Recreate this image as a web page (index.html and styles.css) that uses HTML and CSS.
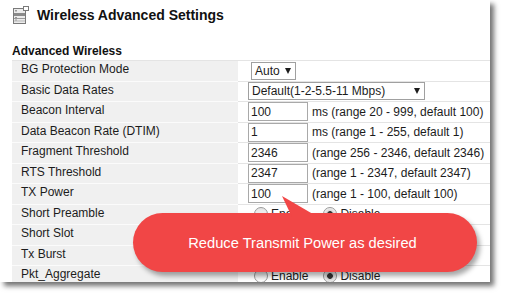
FILE: index.html
```html
<!DOCTYPE html>
<html lang="en">
<head>
    <meta charset="UTF-8">
    <title>Wireless Advanced Settings</title>
    <link rel="stylesheet" href="styles.css">
</head>
<body>

    <div class="panel">
        <div class="page-title">
            <svg class="title-icon" width="16" height="18" viewBox="0 0 16 18">
                <rect x="0.5" y="2.5" width="12" height="15" fill="#ececec" stroke="#7a7a7a"/>
                <rect x="1" y="7" width="11" height="3" fill="#8a8a8a"/>
                <line x1="1" y1="12.5" x2="12" y2="12.5" stroke="#9a9a9a"/>
                <line x1="1" y1="15" x2="12" y2="15" stroke="#b5b5b5"/>
                <rect x="2" y="4" width="2" height="1.5" fill="#9a9a9a"/>
                <rect x="2" y="11" width="2" height="1" fill="#9a9a9a"/>
                <rect x="2" y="13.5" width="2" height="1" fill="#9a9a9a"/>
                <rect x="10.5" y="0.5" width="5" height="4" fill="#fff" stroke="#7a7a7a"/>
            </svg>
            <h1>Wireless Advanced Settings</h1>
        </div>

        <h2 class="section-title">Advanced Wireless</h2>

        <div class="settings">
            <div class="row">
                <div class="label">BG Protection Mode</div>
                <div class="value">
                    <span class="select select-auto">Auto<i class="caret"></i></span>
                </div>
            </div>
            <div class="row">
                <div class="label">Basic Data Rates</div>
                <div class="value">
                    <span class="select select-rates">Default(1-2-5.5-11 Mbps)<i class="caret"></i></span>
                </div>
            </div>
            <div class="row">
                <div class="label">Beacon Interval</div>
                <div class="value">
                    <input class="field" type="text" value="100">
                    <span>ms (range 20 - 999, default 100)</span>
                </div>
            </div>
            <div class="row">
                <div class="label">Data Beacon Rate (DTIM)</div>
                <div class="value">
                    <input class="field" type="text" value="1">
                    <span>ms (range 1 - 255, default 1)</span>
                </div>
            </div>
            <div class="row">
                <div class="label">Fragment Threshold</div>
                <div class="value">
                    <input class="field" type="text" value="2346">
                    <span>(range 256 - 2346, default 2346)</span>
                </div>
            </div>
            <div class="row">
                <div class="label">RTS Threshold</div>
                <div class="value">
                    <input class="field" type="text" value="2347">
                    <span>(range 1 - 2347, default 2347)</span>
                </div>
            </div>
            <div class="row">
                <div class="label">TX Power</div>
                <div class="value">
                    <input class="field" type="text" value="100">
                    <span>(range 1 - 100, default 100)</span>
                </div>
            </div>
            <div class="row">
                <div class="label">Short Preamble</div>
                <div class="value">
                    <span class="radio">Enable</span>
                    <span class="radio checked">Disable</span>
                </div>
            </div>
            <div class="row">
                <div class="label">Short Slot</div>
                <div class="value">
                    <span class="radio">Enable</span>
                    <span class="radio checked">Disable</span>
                </div>
            </div>
            <div class="row">
                <div class="label">Tx Burst</div>
                <div class="value">
                    <span class="radio">Enable</span>
                    <span class="radio checked">Disable</span>
                </div>
            </div>
            <div class="row">
                <div class="label">Pkt_Aggregate</div>
                <div class="value">
                    <span class="radio">Enable</span>
                    <span class="radio checked">Disable</span>
                </div>
            </div>
        </div>

        <div class="callout">Reduce Transmit Power as desired</div>
    </div>

</body>
</html>
```

FILE: styles.css
```css
* {
    box-sizing: border-box;
}

html,
body {
    margin: 0;
    padding: 0;
    background-color: #ffffff;
}

body {
    font-family: "Liberation Sans", Arial, sans-serif;
    color: #1c1c1c;
    width: 506px;
    height: 296px;
    overflow: hidden;
}

.panel {
    position: relative;
    width: 490px;
    height: 282px;
    background-color: #ffffff;
    overflow: hidden;
    box-shadow: 4px 4px 5px rgba(0, 0, 0, 0.55);
}

/* header */

.page-title {
    display: flex;
    align-items: center;
    gap: 8px;
    height: 30px;
    padding-left: 13px;
}

.page-title h1 {
    margin: 0;
    font-size: 14px;
    font-weight: bold;
    color: #111111;
}

.section-title {
    margin: 13px 0 1px 12px;
    font-size: 12px;
    line-height: 16px;
    font-weight: bold;
    color: #111111;
}

/* settings rows */

.settings {
    margin-left: 12px;
    border-top: 1px solid #e4e4e4;
}

.row {
    display: grid;
    grid-template-columns: 226px 1fr;
    font-size: 12px;
}

.label {
    display: flex;
    align-items: center;
    height: 20.5px;
    padding-left: 9px;
    padding-bottom: 3px;
    background-color: #f0f0f0;
    border-bottom: 1px solid #fbfbfb;
}

.value {
    display: flex;
    align-items: center;
    gap: 4px;
    height: 20.5px;
    padding-left: 10px;
    border-bottom: 1px solid #e4e4e4;
    white-space: nowrap;
}

.field {
    width: 60px;
    height: 19px;
    margin: 0;
    padding: 0 2px;
    border: 1px solid #a9a9a9;
    font-family: "Liberation Sans", Arial, sans-serif;
    font-size: 12px;
    color: #1c1c1c;
}

.select {
    display: flex;
    align-items: center;
    height: 18px;
    padding: 0 4px 0 3px;
    border: 1px solid #a0a0a0;
    background-color: #ffffff;
}

.select-auto {
    width: 45px;
    margin-left: 3px;
}

.select-rates {
    width: 177px;
}

.caret {
    margin-left: auto;
    width: 0;
    height: 0;
    border-left: 3.5px solid transparent;
    border-right: 3.5px solid transparent;
    border-top: 6px solid #1c1c1c;
}

.radio {
    display: inline-flex;
    align-items: center;
    gap: 3px;
    margin-left: 6px;
    margin-right: 11px;
}

.radio::before {
    content: "";
    width: 12px;
    height: 12px;
    border-radius: 50%;
    border: 1px solid #9a9a9a;
    background: linear-gradient(#e4e4e4, #ffffff);
}

.radio.checked {
    margin-left: 0;
}

.radio.checked::before {
    background: radial-gradient(circle, #333333 0, #333333 2.5px, #d8d8d8 3.2px, #f2f2f2 6px);
}

/* annotation bubble */

.callout {
    position: absolute;
    left: 133px;
    top: 213px;
    width: 344px;
    height: 59px;
    display: flex;
    align-items: center;
    justify-content: center;
    padding-right: 5px;
    border-radius: 30px;
    background-color: #f14646;
    color: #ffffff;
    font-size: 14.7px;
    box-shadow: 3px 4px 5px rgba(0, 0, 0, 0.35);
}

.callout::before {
    content: "";
    position: absolute;
    left: 148px;
    top: -18px;
    width: 38px;
    height: 22px;
    background-color: #f14646;
    clip-path: polygon(1px 1px, 37px 22px, 11px 22px);
}
```
